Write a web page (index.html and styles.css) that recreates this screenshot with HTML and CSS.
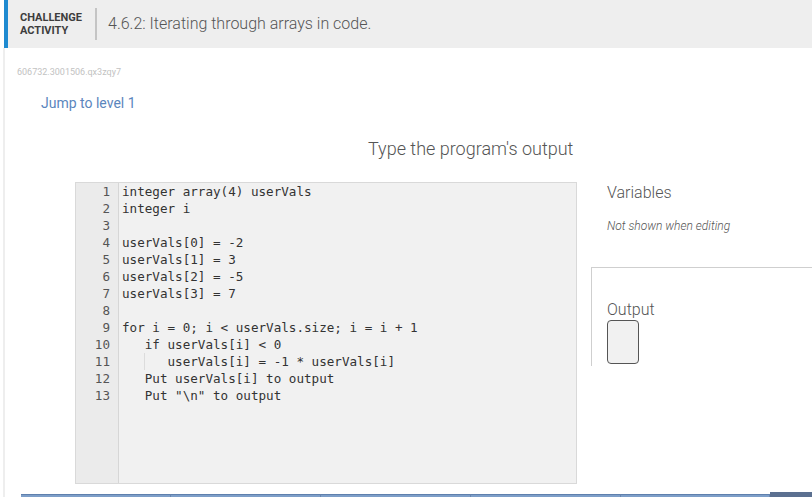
FILE: index.html
```html
<!DOCTYPE html>
<html>
<head>
<meta charset="utf-8">
<link rel="stylesheet" href="styles.css">
</head>
<body>
<header class="header">
  <div class="stripe"></div>
  <div class="label">CHALLENGE<br>ACTIVITY</div>
  <div class="divider"></div>
  <div class="title">4.6.2: Iterating through arrays in code.</div>
</header>
<div class="page">
  <div class="hash">606732.3001506.qx3zqy7</div>
  <div class="jump">Jump to level 1</div>
  <div class="prompt">Type the program's output</div>
  <div class="work">
    <div class="code">
      <div class="gutter"><div>1</div><div>2</div><div>3</div><div>4</div><div>5</div><div>6</div><div>7</div><div>8</div><div>9</div><div>10</div><div>11</div><div>12</div><div>13</div></div>
      <div class="lines"><div>integer array(4) userVals</div><div>integer i</div><div>&nbsp;</div><div>userVals[0] = -2</div><div>userVals[1] = 3</div><div>userVals[2] = -5</div><div>userVals[3] = 7</div><div>&nbsp;</div><div>for i = 0; i &lt; userVals.size; i = i + 1</div><div>   if userVals[i] &lt; 0</div><div>   <span class="guide">   </span>userVals[i] = -1 * userVals[i]</div><div>   Put userVals[i] to output</div><div>   Put "\n" to output</div></div>
    </div>
    <div class="side">
      <div class="vars">Variables</div>
      <div class="note">Not shown when editing</div>
      <div class="outpanel">
        <div class="outlabel">Output</div>
        <div class="outbox"></div>
      </div>
    </div>
  </div>
  <div class="tabs">
    <div class="tab"></div><div class="tab"></div><div class="tab"></div><div class="tab"></div><div class="tab last"></div>
    <div class="tabdark"></div>
  </div>
</div>
</body>
</html>
```
FILE: styles.css
```css
html, body {
  margin: 0;
  padding: 0;
  background: #ffffff;
  overflow: hidden;
  width: 812px;
  height: 497px;
}
body {
  font-family: Roboto, "Liberation Sans", sans-serif;
  color: #555;
}
.header {
  display: flex;
  align-items: center;
  height: 48px;
  background: #eeeeee;
  margin-left: 4px;
}
.stripe {
  width: 4px;
  align-self: stretch;
  background: #1f8ad0;
}
.label {
  font-weight: 700;
  font-size: 11px;
  line-height: 13px;
  color: #3d3d3d;
  padding-left: 12px;
  width: 75px;
}
.divider {
  width: 2px;
  height: 32px;
  background: #c4c4c4;
}
.title {
  margin-left: 11px;
  font-size: 16px;
  font-weight: 300;
  color: #555;
  padding-bottom: 1px;
}
.page {
  margin-left: 3px;
  border-left: 2px solid #eeeeee;
  height: 449px;
  position: relative;
}
.hash {
  font-size: 9px;
  color: #c2c2c2;
  padding-left: 12px;
  padding-top: 19px;
  line-height: 11px;
}
.jump {
  font-size: 14px;
  color: #5b86bd;
  padding-left: 36px;
  padding-top: 17px;
  line-height: 17px;
}
.prompt {
  font-size: 18px;
  font-weight: 300;
  color: #555;
  padding-left: 363px;
  padding-top: 26px;
  line-height: 22px;
}
.work {
  display: flex;
  margin-top: 22px;
  padding-left: 70px;
}
.code {
  display: flex;
  width: 500px;
  height: 300px;
  border: 1px solid #d9d9d9;
  background: #f1f1f1;
  font-family: "DejaVu Sans Mono", "Liberation Mono", monospace;
  font-size: 12.6px;
  line-height: 17px;
  color: #333;
}
.gutter {
  width: 34px;
  padding-right: 8px;
  text-align: right;
  background: #ebebeb;
  border-right: 1px solid #d6d6d6;
  color: #555;
}
.lines {
  padding-left: 3px;
  white-space: pre;
}
.guide {
  display: inline-block;
  box-shadow: inset 1px 0 0 #dcdcdc;
  margin-left: -1px;
  padding-left: 1px;
}
.side {
  margin-left: 14px;
  flex: 1;
}
.vars {
  font-size: 16px;
  font-weight: 300;
  color: #555;
  padding-left: 16px;
  padding-top: 1px;
  line-height: 19px;
}
.note {
  font-size: 12px;
  font-style: italic;
  font-weight: 300;
  color: #555;
  padding-left: 16px;
  padding-top: 18px;
  line-height: 13px;
}
.outpanel {
  margin-top: 34px;
  border-top: 1px solid #cfcfcf;
  border-left: 1px solid #cfcfcf;
  height: 98px;
  margin-right: -20px;
}
.outlabel {
  font-size: 16px;
  font-weight: 300;
  color: #555;
  padding-left: 15px;
  padding-top: 32px;
  line-height: 19px;
}
.outbox {
  margin-left: 15px;
  margin-top: 1px;
  width: 30px;
  height: 42px;
  border: 1.5px solid #555;
  border-radius: 4px;
  background: #f1f1f1;
}
.tabs {
  display: flex;
  align-items: flex-end;
  position: absolute;
  left: 16px;
  right: 0;
  bottom: 0;
  height: 5px;
}
.tab {
  width: 149px;
  height: 2px;
  background: #7d9ec8;
  border-top: 1px solid #5f80ad;
  border-right: 1px solid #6886b0;
}
.tab.last {
  width: 148px;
}
.tabdark {
  flex: 1;
  height: 5px;
  background: #5b7090;
}
```
